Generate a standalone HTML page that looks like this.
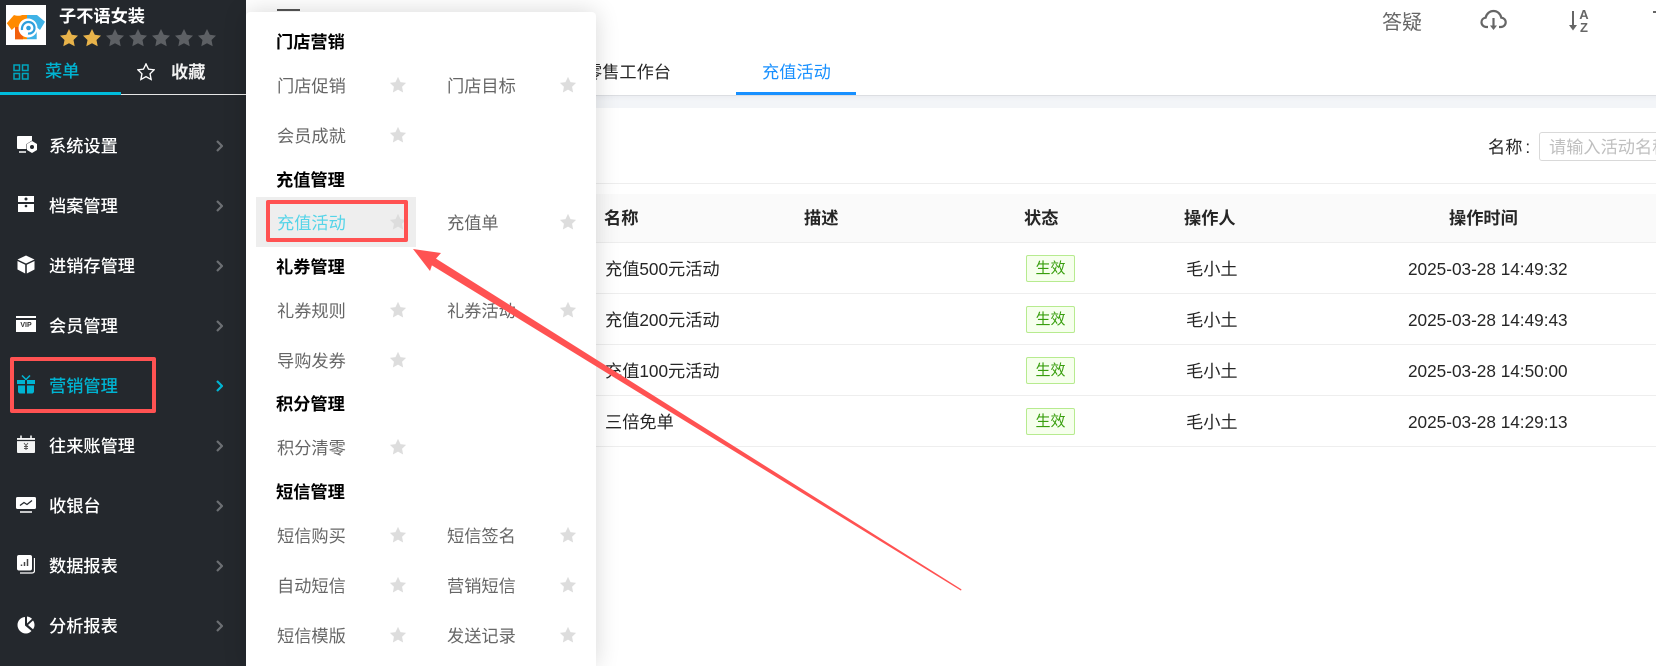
<!DOCTYPE html>
<html lang="zh"><head><meta charset="utf-8"><title>充值活动</title>
<style>
*{box-sizing:border-box}
html,body{margin:0;padding:0;width:1656px;height:666px;overflow:hidden;background:#fff;font-family:"Liberation Sans","Noto Sans CJK SC",sans-serif;font-size:17.2px}
.a{position:absolute}
.t{position:absolute;line-height:26px;height:26px;white-space:nowrap}
#side{left:0;top:0;width:246px;height:666px;background:#24282d;color:#fff;z-index:3}
#pop{left:246px;top:12px;width:350px;height:654px;background:#fff;border-radius:4px 4px 0 0;box-shadow:0 0 24px rgba(0,0,0,.16);z-index:4}
.h{font-weight:700;color:#000}
.i{color:#666}
.s{position:absolute;width:18px;height:18px;fill:#ddd;margin-top:1px}
.l{position:absolute;left:596px;right:0;height:1px;background:#eee}
.c{color:#262626}
.th{font-weight:700;color:#262626}
.tag{position:absolute;left:1026px;width:49px;height:27px;border:1px solid #b7eb8f;background:#f6ffed;color:#389e0d;font-size:15px;line-height:25px;text-align:center;border-radius:2px}
.m{left:49px;font-weight:500}
.ch{position:absolute;left:216px;width:7px;height:12px;fill:none;stroke:#6c6f73;stroke-width:2.2}
</style></head><body>

<!-- top bar -->
<div class="a" style="left:0;top:0;width:1656px;height:47px;background:#fff;box-shadow:0 1px 4px rgba(0,0,0,.06)"></div>
<div class="a" style="left:277px;top:9px;width:23px;height:2px;background:#555;z-index:2"></div>
<div class="t" style="left:1382px;top:10px;font-size:20px;color:#666">答疑</div>
<svg class="a" style="left:1480px;top:9px" width="28" height="24" viewBox="0 0 28 24" fill="none" stroke="#666" stroke-width="2.2"><path d="M8 18H6.500C3.500 18 1.500 15.800 1.500 13.200C1.500 10.800 3.300 9 5.600 8.700C6.500 4.800 9.600 2 13.500 2C17.400 2 20.500 4.800 21.300 8.700C23.800 8.900 25.700 10.800 25.700 13.200C25.700 15.800 23.600 18 20.800 18H19"/><path d="M13.500 9V19"/><path d="M10 16.500H17L13.500 21Z" fill="#666" stroke="none"/></svg>
<svg class="a" style="left:1568px;top:10px" width="10" height="21" viewBox="0 0 10 21" fill="none" stroke="#666" stroke-width="2"><path d="M5 1V17"/><path d="M1 15H9L5 20.500Z" fill="#666" stroke="none"/></svg>
<div class="a" style="left:1577px;top:8px;width:14px;font-size:13px;line-height:13px;font-weight:700;color:#666;text-align:center">A<br>Z</div>
<div class="a" style="left:1653px;top:11px;width:3px;height:2px;background:#666"></div>

<!-- tabs bar -->
<div class="a" style="left:0;top:47px;width:1656px;height:49px;background:#fff;border-bottom:1px solid #dcdee2"></div>
<div class="a" style="left:0;top:96px;width:1656px;height:12px;background:linear-gradient(#eceef2,#f3f5f8 5px)"></div>
<div class="t c" style="left:585px;top:59px">零售工作台</div>
<div class="t" style="left:762px;top:59px;color:#1890ff">充值活动</div>
<div class="a" style="left:736px;top:92px;width:120px;height:3px;background:#1890ff"></div>

<!-- filter -->
<div class="t c" style="left:1488px;top:134px">名称<span style="margin-left:3px">:</span></div>
<div class="a" style="left:1539px;top:132px;width:140px;height:29px;border:1px solid #d9d9d9;border-radius:3px;background:#fff"></div>
<div class="t" style="left:1549px;top:134px;color:#bfbfbf">请输入活动名称</div>
<div class="l" style="top:183px"></div>

<!-- table -->
<div class="a" style="left:596px;top:194px;width:1060px;height:48px;background:#fafafa"></div>
<div class="l" style="top:242px"></div>
<div class="t th" style="left:604px;top:205px">名称</div>
<div class="t th" style="left:804px;top:205px">描述</div>
<div class="t th" style="left:1024px;top:205px">状态</div>
<div class="t th" style="left:1184px;top:205px">操作人</div>
<div class="t th" style="left:1449px;top:205px">操作时间</div>

<div class="t c" style="left:605px;top:256px">充值500元活动</div>
<div class="tag" style="top:255px">生效</div>
<div class="t c" style="left:1186px;top:256px">毛小土</div>
<div class="t c" style="left:1408px;top:256px">2025-03-28 14:49:32</div>
<div class="l" style="top:293px"></div>

<div class="t c" style="left:605px;top:307px">充值200元活动</div>
<div class="tag" style="top:306px">生效</div>
<div class="t c" style="left:1186px;top:307px">毛小土</div>
<div class="t c" style="left:1408px;top:307px">2025-03-28 14:49:43</div>
<div class="l" style="top:344px"></div>

<div class="t c" style="left:605px;top:358px">充值100元活动</div>
<div class="tag" style="top:357px">生效</div>
<div class="t c" style="left:1186px;top:358px">毛小土</div>
<div class="t c" style="left:1408px;top:358px">2025-03-28 14:50:00</div>
<div class="l" style="top:395px"></div>

<div class="t c" style="left:605px;top:409px">三倍免单</div>
<div class="tag" style="top:408px">生效</div>
<div class="t c" style="left:1186px;top:409px">毛小土</div>
<div class="t c" style="left:1408px;top:409px">2025-03-28 14:29:13</div>
<div class="l" style="top:446px"></div>

<!-- sidebar -->
<div class="a" id="side">
  <div class="a" style="left:6px;top:5px;width:40px;height:40px;background:#fff"></div>
  <svg class="a" style="left:6px;top:5px" width="40" height="40" viewBox="0 0 40 40">
    <path d="M8 10L.8 18.300L5.700 25L9 22V34.300H21V10H16C14 11 11 11 8 10Z" fill="#ff8a00"/>
    <path d="M9 22V34.300H17V22Z" fill="#f2600c"/>
    <path d="M24 10H31L39 16.700L34 25L30.700 22.300V34.300H21V10Z" fill="#3fb2e6"/>
    <circle cx="22" cy="23" r="9.500" fill="#fff"/>
    <path d="M16 25C15.500 20.500 18.500 17 22.500 17C26 17 28.500 19.500 28.500 23C28.500 26.500 25.500 29 22 28.500" fill="none" stroke="#2e9fdc" stroke-width="2.200"/>
    <circle cx="22.500" cy="23" r="2.300" fill="#2e9fdc"/>
  </svg>
  <div class="t" style="left:59px;top:3px;font-weight:700">子不语女装</div>
  <svg class="a" style="left:59px;top:28px" width="160" height="20" viewBox="0 0 160 20">
    <defs>
      <path id="st" d="M10 1L12.800 6.800L19 7.600L14.500 12L15.700 18.300L10 15.200L4.300 18.300L5.500 12L1 7.600L7.200 6.800Z"/>
    </defs>
    <use href="#st" x="0" fill="#e8b34a"/>
    <use href="#st" x="23" fill="#e8b34a"/>
    <use href="#st" x="46" fill="#5d6064"/>
    <use href="#st" x="69" fill="#5d6064"/>
    <use href="#st" x="92" fill="#5d6064"/>
    <use href="#st" x="115" fill="#5d6064"/>
    <use href="#st" x="138" fill="#5d6064"/>
  </svg>

  <svg class="a" style="left:13px;top:64px" width="16" height="16" viewBox="0 0 16 16" fill="none" stroke="#00a5bd" stroke-width="1.500"><rect x="1" y="1" width="5.500" height="5.500"/><rect x="9.500" y="1" width="5.500" height="5.500"/><rect x="1" y="9.500" width="5.500" height="5.500"/><rect x="9.500" y="9.500" width="5.500" height="5.500"/></svg>
  <div class="t" style="left:45px;top:58px;color:#00b4d2;font-weight:500">菜单</div>
  <svg class="a" style="left:137px;top:63px" width="18" height="18" viewBox="0 0 20 20" fill="none" stroke="#fff" stroke-width="1.500"><use href="#st"/></svg>
  <div class="t" style="left:171px;top:59px;font-weight:700;color:#f2f2f2">收藏</div>
  <div class="a" style="left:121px;top:94px;width:125px;height:1px;background:#e6e6e6"></div>
  <div class="a" style="left:0;top:92px;width:121px;height:3px;background:#00bcdc"></div>

  <svg class="a" style="left:16px;top:135px" width="22" height="20" viewBox="0 0 22 20"><path d="M1 2C1 1.400 1.400 1 2 1H16V5.500L10.500 9V14H2C1.400 14 1 13.600 1 13Z" fill="#fff"/><path d="M3 17H10" stroke="#fff" stroke-width="1.500"/><path d="M16 6L21 9V15L16 18L11 15V9Z" fill="#fff"/><circle cx="16" cy="12" r="2" fill="#24282d"/></svg>
  <div class="t m" style="top:133px">系统设置</div>
  <svg class="ch" style="top:140px" viewBox="0 0 7 12"><path d="M1 1L6 6L1 11"/></svg>

  <svg class="a" style="left:17px;top:195px" width="18" height="18" viewBox="0 0 18 18"><path d="M1 1H17V7H1Z" fill="#fff"/><path d="M1 9H17V17H1Z" fill="#fff"/><circle cx="9" cy="4" r="1.500" fill="#24282d"/><circle cx="9" cy="11" r="1.300" fill="#24282d"/></svg>
  <div class="t m" style="top:193px">档案管理</div>
  <svg class="ch" style="top:200px" viewBox="0 0 7 12"><path d="M1 1L6 6L1 11"/></svg>

  <svg class="a" style="left:17px;top:255px" width="18" height="19" viewBox="0 0 18 19"><path d="M9 .5L17.500 4.500L9 8.500L.5 4.500Z" fill="#fff"/><path d="M.5 6L8.200 9.700V18.500L.5 14.500Z" fill="#fff"/><path d="M17.500 6L9.800 9.700V18.500L17.500 14.500Z" fill="#fff"/></svg>
  <div class="t m" style="top:253px">进销存管理</div>
  <svg class="ch" style="top:260px" viewBox="0 0 7 12"><path d="M1 1L6 6L1 11"/></svg>

  <div class="a" style="left:16px;top:316px;width:20px;height:16px;background:#fff"></div>
  <div class="a" style="left:16px;top:318px;width:20px;height:2px;background:#24282d"></div>
  <div class="a" style="left:16px;top:320px;width:20px;height:12px;color:#333;font-size:7px;font-weight:700;line-height:12px;text-align:center">VIP</div>
  <div class="t m" style="top:313px">会员管理</div>
  <svg class="ch" style="top:320px" viewBox="0 0 7 12"><path d="M1 1L6 6L1 11"/></svg>

  <svg class="a" style="left:17px;top:375px" width="18" height="19" viewBox="0 0 18 19" fill="#00b4d2"><path d="M0 5H8V9H0ZM10 5H18V9H10ZM1 10.500H8V18.500H3C2 18.500 1 17.500 1 16.500ZM10 10.500H17V16.500C17 17.500 16 18.500 15 18.500H10Z"/><path d="M5 .5L9 4.500L13 .5" fill="none" stroke="#00b4d2" stroke-width="1.500"/></svg>
  <div class="t m" style="top:373px;color:#00b4d2">营销管理</div>
  <svg class="ch" style="top:380px;stroke:#00b4d2" viewBox="0 0 7 12"><path d="M1 1L6 6L1 11"/></svg>
  <div class="a" style="left:10px;top:357px;width:146px;height:56px;border:4px solid #ff5252;border-radius:2px"></div>

  <svg class="a" style="left:16px;top:435px" width="20" height="19" viewBox="0 0 20 19"><path d="M1 3H19V17C19 17.600 18.600 18 18 18H2C1.400 18 1 17.600 1 17Z" fill="#fff" fill-opacity=".95"/><path d="M1 5.500H19" stroke="#24282d" stroke-width="1.300"/><path d="M5 .5V4M15 .5V4" stroke="#fff" stroke-width="1.500"/><path d="M8 8L10 10.500L12 8M10 10.500V15M8 11.500H12M8 13.500H12" stroke="#555" stroke-width="1" fill="none"/></svg>
  <div class="t m" style="top:433px">往来账管理</div>
  <svg class="ch" style="top:440px" viewBox="0 0 7 12"><path d="M1 1L6 6L1 11"/></svg>

  <svg class="a" style="left:16px;top:496px" width="20" height="18" viewBox="0 0 20 18"><rect x="0" y="1" width="20" height="12" rx="1.500" fill="#fff"/><path d="M4 9.500L8 6.500L11 8.500L16 4.500" fill="none" stroke="#24282d" stroke-width="1.300"/><path d="M4 16H16" stroke="#fff" stroke-width="1.500"/></svg>
  <div class="t m" style="top:493px">收银台</div>
  <svg class="ch" style="top:500px" viewBox="0 0 7 12"><path d="M1 1L6 6L1 11"/></svg>

  <svg class="a" style="left:17px;top:555px" width="18" height="19" viewBox="0 0 18 19"><path d="M3 18H15C16.500 18 17.500 17 17.500 15.500V3" fill="none" stroke="#fff" stroke-width="1.300"/><rect x="0" y="0" width="15" height="15.500" rx="2" fill="#fff"/><path d="M4.500 11V9.500M7.500 11V7M10.500 11V4" stroke="#444" stroke-width="1.500"/></svg>
  <div class="t m" style="top:553px">数据报表</div>
  <svg class="ch" style="top:560px" viewBox="0 0 7 12"><path d="M1 1L6 6L1 11"/></svg>

  <svg class="a" style="left:17px;top:616px" width="18" height="18" viewBox="0 0 18 18"><path d="M8 1V9.500L14.500 15C13 16.500 11 17.500 9 17.500C4.300 17.500 .5 13.700 .5 9C.5 4.700 3.700 1.300 8 1Z" fill="#fff"/><path d="M10 .5C12 .7 13.500 1.500 15 2.800L10 7.500Z" fill="#fff"/><path d="M11 9L16 4.500C17 5.800 17.500 7.500 17.500 9C17.500 10.500 17 12 16 13.300Z" fill="#fff"/></svg>
  <div class="t m" style="top:613px">分析报表</div>
  <svg class="ch" style="top:620px" viewBox="0 0 7 12"><path d="M1 1L6 6L1 11"/></svg>
</div>

<!-- popup -->
<div class="a" id="pop"></div>
<div class="a" style="left:0;top:0;width:1656px;height:666px;z-index:5;pointer-events:none">
  <div class="a" style="left:256px;top:197px;width:160px;height:50px;background:#eee"></div>

  <div class="t h" style="left:276px;top:29px">门店营销</div>
  <div class="t i" style="left:277px;top:73px">门店促销</div><svg class="s" style="left:389px;top:75px" viewBox="0 0 20 20"><use href="#st"/></svg>
  <div class="t i" style="left:447px;top:73px">门店目标</div><svg class="s" style="left:559px;top:75px" viewBox="0 0 20 20"><use href="#st"/></svg>
  <div class="t i" style="left:277px;top:123px">会员成就</div><svg class="s" style="left:389px;top:125px" viewBox="0 0 20 20"><use href="#st"/></svg>

  <div class="t h" style="left:276px;top:167px">充值管理</div>
  <div class="t" style="left:277px;top:210px;color:#55d4e8">充值活动</div><svg class="s" style="left:389px;top:212px" viewBox="0 0 20 20"><use href="#st"/></svg>
  <div class="t i" style="left:447px;top:210px">充值单</div><svg class="s" style="left:559px;top:212px" viewBox="0 0 20 20"><use href="#st"/></svg>
  <div class="a" style="left:266px;top:200px;width:142px;height:42px;border:4px solid #ff5252;border-radius:2px"></div>

  <div class="t h" style="left:276px;top:254px">礼券管理</div>
  <div class="t i" style="left:277px;top:298px">礼券规则</div><svg class="s" style="left:389px;top:300px" viewBox="0 0 20 20"><use href="#st"/></svg>
  <div class="t i" style="left:447px;top:298px">礼券活动</div><svg class="s" style="left:559px;top:300px" viewBox="0 0 20 20"><use href="#st"/></svg>
  <div class="t i" style="left:277px;top:348px">导购发券</div><svg class="s" style="left:389px;top:350px" viewBox="0 0 20 20"><use href="#st"/></svg>

  <div class="t h" style="left:276px;top:391px">积分管理</div>
  <div class="t i" style="left:277px;top:435px">积分清零</div><svg class="s" style="left:389px;top:437px" viewBox="0 0 20 20"><use href="#st"/></svg>

  <div class="t h" style="left:276px;top:479px">短信管理</div>
  <div class="t i" style="left:277px;top:523px">短信购买</div><svg class="s" style="left:389px;top:525px" viewBox="0 0 20 20"><use href="#st"/></svg>
  <div class="t i" style="left:447px;top:523px">短信签名</div><svg class="s" style="left:559px;top:525px" viewBox="0 0 20 20"><use href="#st"/></svg>
  <div class="t i" style="left:277px;top:573px">自动短信</div><svg class="s" style="left:389px;top:575px" viewBox="0 0 20 20"><use href="#st"/></svg>
  <div class="t i" style="left:447px;top:573px">营销短信</div><svg class="s" style="left:559px;top:575px" viewBox="0 0 20 20"><use href="#st"/></svg>
  <div class="t i" style="left:277px;top:623px">短信模版</div><svg class="s" style="left:389px;top:625px" viewBox="0 0 20 20"><use href="#st"/></svg>
  <div class="t i" style="left:447px;top:623px">发送记录</div><svg class="s" style="left:559px;top:625px" viewBox="0 0 20 20"><use href="#st"/></svg>

  <svg class="a" style="left:0;top:0" width="1656" height="666"><polygon points="413,249 441,253 436,258.600 961.500,589.400 961,590.600 431.900,265.400 430,271" fill="#ff5252"/></svg>
</div>
</body></html>
